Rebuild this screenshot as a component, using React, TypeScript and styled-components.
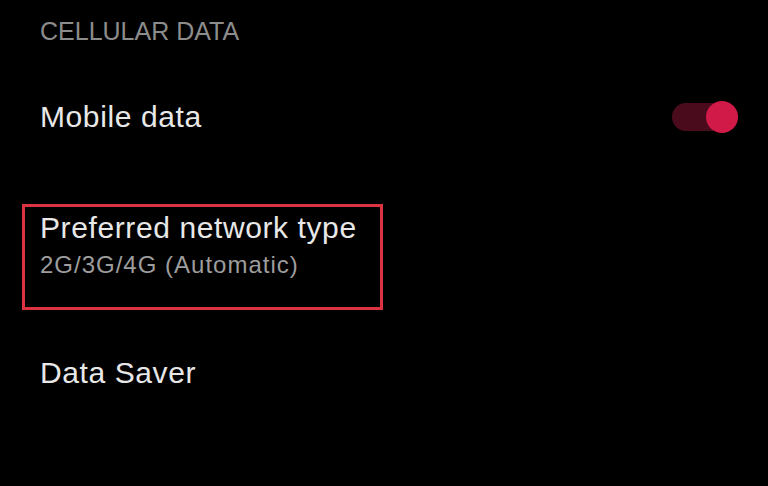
import React, { useState } from "react"
import styled, { createGlobalStyle } from "styled-components"

const GlobalStyle = createGlobalStyle`
  html, body {
    margin: 0;
    padding: 0;
    background: #000;
  }
  body {
    font-family: "Liberation Sans", Arial, sans-serif;
  }
`

const Screen = styled.div`
  width: 768px;
  height: 486px;
  background: #000;
  padding: 0 28px 0 40px;
  box-sizing: border-box;
  overflow: hidden;
`

const SectionTitle = styled.div`
  padding: 16px 0 35px;
  font-size: 25px;
  line-height: 30px;
  letter-spacing: 0;
  color: #8c8c8c;
`

const Row = styled.div`
  height: 72px;
  display: flex;
  align-items: center;
  justify-content: space-between;
`

const Title = styled.div`
  font-size: 30px;
  line-height: 36px;
  letter-spacing: 0.6px;
  color: #e8e8e8;
`

const Summary = styled.div`
  font-size: 24px;
  line-height: 30px;
  letter-spacing: 1px;
  color: #9d9d9d;
`

const Highlight = styled.div`
  width: 361px;
  box-sizing: border-box;
  margin: 51px 0 27px -18px;
  padding: 3px 0 27px 15px;
  border: 3px solid #dc3340;
  display: flex;
  flex-direction: column;
  gap: 4px;
`

const Track = styled.button<{ $on: boolean }>`
  position: relative;
  width: 66px;
  height: 28px;
  margin-right: 2px;
  padding: 0;
  border: none;
  border-radius: 14px;
  background: ${(p) => (p.$on ? "#4a0b1c" : "#3a3a3a")};
  cursor: pointer;
`

const Knob = styled.span<{ $on: boolean }>`
  position: absolute;
  top: -2px;
  left: ${(p) => (p.$on ? "34px" : "0")};
  width: 32px;
  height: 32px;
  border-radius: 50%;
  background: ${(p) => (p.$on ? "#d11a48" : "#bdbdbd")};
`

const App: React.FC = () => {
  const [mobileData, setMobileData] = useState(true)

  return (
    <>
      <GlobalStyle />
      <Screen>
        <SectionTitle>CELLULAR DATA</SectionTitle>
        <Row>
          <Title>Mobile data</Title>
          <Track
            $on={mobileData}
            aria-label="Mobile data"
            onClick={() => setMobileData(!mobileData)}
          >
            <Knob $on={mobileData} />
          </Track>
        </Row>
        <Highlight>
          <Title>Preferred network type</Title>
          <Summary>2G/3G/4G (Automatic)</Summary>
        </Highlight>
        <Row>
          <Title>Data Saver</Title>
        </Row>
      </Screen>
    </>
  )
}

export default App
